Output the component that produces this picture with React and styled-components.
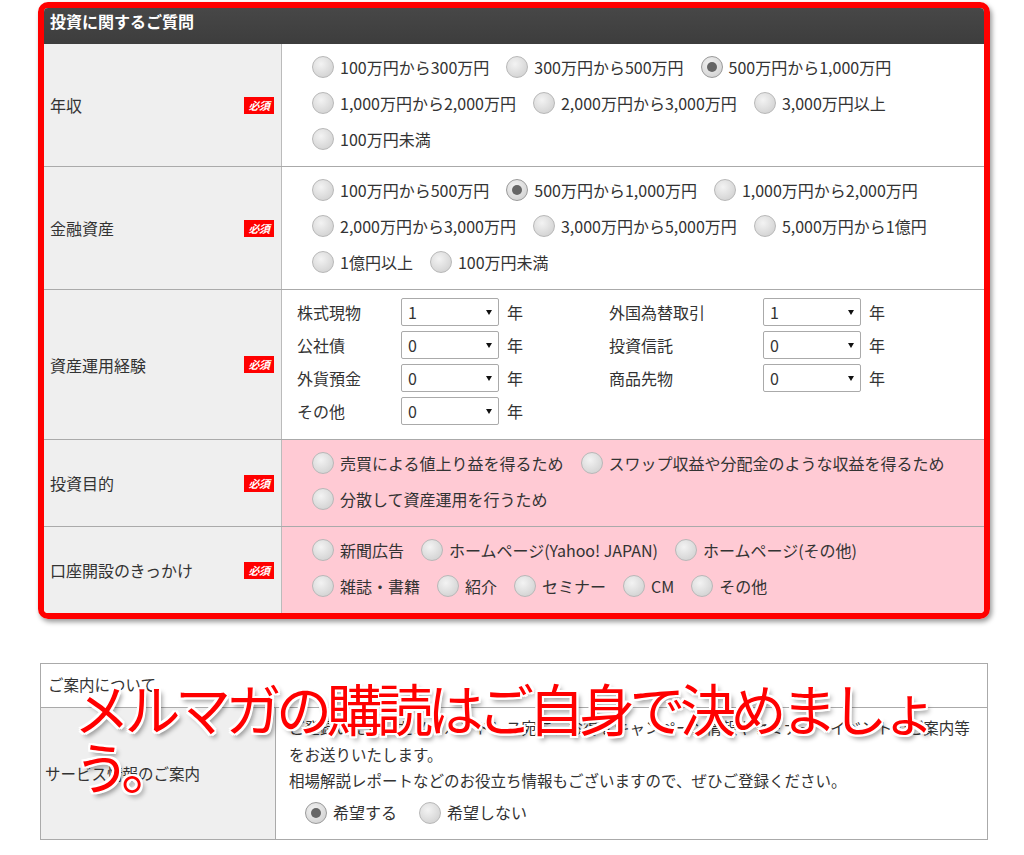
import React from "react";
import styled, { createGlobalStyle } from "styled-components";

const GlobalStyle = createGlobalStyle`
  body {
    margin: 0;
    background: #fff;
    color: #333;
    font-family: "Noto Sans CJK JP", "Noto Sans", sans-serif;
  }
`;

const incomeOptions = [
  { label: "100万円から300万円" },
  { label: "300万円から500万円" },
  { label: "500万円から1,000万円", checked: true },
  { label: "1,000万円から2,000万円" },
  { label: "2,000万円から3,000万円" },
  { label: "3,000万円以上" },
  { label: "100万円未満" },
];

const assetOptions = [
  { label: "100万円から500万円" },
  { label: "500万円から1,000万円", checked: true },
  { label: "1,000万円から2,000万円" },
  { label: "2,000万円から3,000万円" },
  { label: "3,000万円から5,000万円" },
  { label: "5,000万円から1億円" },
  { label: "1億円以上" },
  { label: "100万円未満" },
];

const purposeOptions = [
  { label: "売買による値上り益を得るため" },
  { label: "スワップ収益や分配金のような収益を得るため" },
  { label: "分散して資産運用を行うため" },
];

const triggerOptions = [
  { label: "新聞広告" },
  { label: "ホームページ(Yahoo! JAPAN)" },
  { label: "ホームページ(その他)" },
  { label: "雑誌・書籍" },
  { label: "紹介" },
  { label: "セミナー" },
  { label: "CM" },
  { label: "その他" },
];

const experience = [
  ["株式現物", "1", "外国為替取引", "1"],
  ["公社債", "0", "投資信託", "0"],
  ["外貨預金", "0", "商品先物", "0"],
  ["その他", "0"],
];

const Radio = ({ label, checked }) => (
  <RadioLabel>
    <Circle $checked={checked} />
    {label}
  </RadioLabel>
);

const YearSelect = ({ value }) => (
  <SelectWrap>
    <Select defaultValue={value}>
      {["0", "1", "2", "3", "4", "5"].map((v) => (
        <option key={v} value={v}>{v}</option>
      ))}
    </Select>
  </SelectWrap>
);

const RadioRow = ({ title, options, pink }) => (
  <Row>
    <Label>
      {title}
      <Badge>必須</Badge>
    </Label>
    <Value $pink={pink}>
      {options.map((o) => (
        <Radio key={o.label} {...o} />
      ))}
    </Value>
  </Row>
);

export default function App() {
  return (
    <Page>
      <GlobalStyle />
      <Frame>
        <Header>投資に関するご質問</Header>
        <RadioRow title="年収" options={incomeOptions} />
        <RadioRow title="金融資産" options={assetOptions} />
        <Row>
          <Label>
            資産運用経験
            <Badge>必須</Badge>
          </Label>
          <ExpGrid>
            {experience.map((r) => (
              <React.Fragment key={r[0]}>
                <span>{r[0]}</span>
                <YearSelect value={r[1]} />
                <Unit>年</Unit>
                {r[2] && (
                  <>
                    <span>{r[2]}</span>
                    <YearSelect value={r[3]} />
                    <Unit>年</Unit>
                  </>
                )}
              </React.Fragment>
            ))}
          </ExpGrid>
        </Row>
        <RadioRow title="投資目的" options={purposeOptions} pink />
        <RadioRow title="口座開設のきっかけ" options={triggerOptions} pink />
      </Frame>

      <Info>
        <InfoHeader>ご案内について</InfoHeader>
        <InfoRow>
          <InfoLabel>サービス情報のご案内</InfoLabel>
          <InfoValue>
            <Line>ご登録いただいたメールアドレス宛に、お得なキャンペーン情報やセミナー・イベントのご案内等</Line>
            <Line>をお送りいたします。</Line>
            <Line>相場解説レポートなどのお役立ち情報もございますので、ぜひご登録ください。</Line>
            <InfoRadios>
              <Radio label="希望する" checked />
              <Radio label="希望しない" />
            </InfoRadios>
          </InfoValue>
        </InfoRow>
        <Callout>メルマガの購読はご自身で決めましょう。</Callout>
      </Info>
    </Page>
  );
}

const Page = styled.div`
  width: 952px;
  padding: 2px 0 30px 38px;
`;

const Frame = styled.div`
  box-sizing: border-box;
  width: 952px;
  border: 6px solid #ff0000;
  border-radius: 10px;
  overflow: hidden;
  box-shadow: 2px 3px 5px rgba(0, 0, 0, 0.4);
`;

const Header = styled.div`
  height: 36px;
  line-height: 26px;
  padding-left: 6px;
  background: linear-gradient(#474747, #3d3d3d);
  color: #fff;
  font-size: 16px;
  font-weight: bold;
`;

const Row = styled.div`
  display: grid;
  grid-template-columns: 238px 1fr;
  border-bottom: 1px solid #aaa;

  &:last-child {
    border-bottom: none;
  }
`;

const Label = styled.div`
  display: flex;
  align-items: center;
  justify-content: space-between;
  padding: 0 7px 0 6px;
  background: #efefef;
  border-right: 1px solid #bbb;
  font-size: 16px;
`;

const Badge = styled.span`
  width: 30px;
  height: 17px;
  line-height: 17px;
  text-align: center;
  background: #ff0000;
  color: #fff;
  font-size: 11px;
  font-weight: bold;
  font-style: italic;
  letter-spacing: -0.5px;
`;

const Value = styled.div`
  display: flex;
  flex-wrap: wrap;
  align-content: flex-start;
  column-gap: 17px;
  padding: 5px 30px 9px 30px;
  background: ${(p) => (p.$pink ? "#ffcad4" : "#fff")};
`;

const RadioLabel = styled.label`
  display: inline-flex;
  align-items: center;
  gap: 6px;
  height: 36px;
  font-size: 16px;
  white-space: nowrap;
`;

const Circle = styled.span`
  position: relative;
  box-sizing: border-box;
  width: 22px;
  height: 22px;
  border-radius: 50%;
  border: 1px solid ${(p) => (p.$checked ? "#9a9a9a" : "#b8b8b8")};
  background: radial-gradient(circle at 40% 35%, #f3f3f3, #d5d5d5 75%);

  &::after {
    content: "";
    display: ${(p) => (p.$checked ? "block" : "none")};
    position: absolute;
    left: 5px;
    top: 5px;
    width: 10px;
    height: 10px;
    border-radius: 50%;
    background: #666;
  }
`;

const ExpGrid = styled.div`
  display: grid;
  grid-template-columns: 104px 98px 110px 154px 98px 1fr;
  align-items: center;
  row-gap: 5px;
  padding: 8px 20px 14px 15px;
  font-size: 16px;
  background: #fff;
`;

const Unit = styled.span`
  padding-left: 8px;
`;

const SelectWrap = styled.div`
  position: relative;
  width: 98px;
  height: 28px;

  &::after {
    content: "";
    position: absolute;
    right: 7px;
    top: 12px;
    border-left: 3.5px solid transparent;
    border-right: 3.5px solid transparent;
    border-top: 5px solid #111;
    pointer-events: none;
  }
`;

const Select = styled.select`
  appearance: none;
  box-sizing: border-box;
  width: 100%;
  height: 100%;
  padding: 0 6px;
  border: 1px solid #aaa;
  border-radius: 2px;
  background: #fff;
  color: #333;
  font-family: "Noto Sans CJK JP", sans-serif;
  font-size: 16px;
`;

const Info = styled.div`
  position: relative;
  width: 948px;
  margin: 44px 0 0 2px;
  box-sizing: border-box;
  border: 1px solid #aaa;
`;

const InfoHeader = styled.div`
  height: 43px;
  line-height: 40px;
  padding-left: 7px;
  border-bottom: 1px solid #aaa;
  font-size: 15.5px;
`;

const InfoRow = styled.div`
  display: grid;
  grid-template-columns: 235px 1fr;
`;

const InfoLabel = styled.div`
  display: flex;
  align-items: center;
  padding-left: 4px;
  background: #efefef;
  border-right: 1px solid #aaa;
  font-size: 15.5px;
`;

const InfoValue = styled.div`
  padding: 6px 0 8px 13px;
  font-size: 15.5px;
  line-height: 26.5px;
`;

const Line = styled.div`
  white-space: nowrap;
`;

const InfoRadios = styled.div`
  display: flex;
  column-gap: 22px;
  margin: 1px 0 0 16px;
`;

const Callout = styled.div`
  position: absolute;
  top: 14px;
  left: 33px;
  width: 885px;
  color: #ff0000;
  font-size: 56px;
  font-weight: 400;
  line-height: 58px;
  letter-spacing: -5.5px;
  text-shadow:
    2px 0 0 #fff, -2px 0 0 #fff, 0 2px 0 #fff, 0 -2px 0 #fff,
    2px 2px 0 #fff, -2px -2px 0 #fff, 2px -2px 0 #fff, -2px 2px 0 #fff,
    3px 4px 5px rgba(0, 0, 0, 0.45);
`;
